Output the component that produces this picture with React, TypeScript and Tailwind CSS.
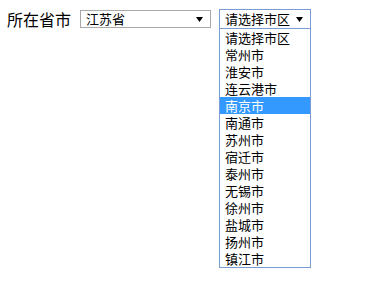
import React from "react";

const cities = [
  "请选择市区",
  "常州市",
  "淮安市",
  "连云港市",
  "南京市",
  "南通市",
  "苏州市",
  "宿迁市",
  "泰州市",
  "无锡市",
  "徐州市",
  "盐城市",
  "扬州市",
  "镇江市",
];

const Arrow: React.FC = () => (
  <svg width="7" height="5" viewBox="0 0 7 5" className="shrink-0">
    <path d="M0 0 H7 L3.5 5 Z" fill="#000" />
  </svg>
);

export default function App() {
  const selected = "南京市";

  return (
    <div
      className="w-[367px] h-[282px] bg-white text-black"
      style={{ fontFamily: '"Noto Sans CJK SC", "Noto Sans", sans-serif' }}
    >
      <div className="flex items-start pt-[9px] pl-[7px]">
        <span className="text-[16px] leading-[20px] mt-[0px]">所在省市</span>

        <div className="ml-[9px] mt-[1px] w-[131px] h-[18px] border border-[#a9a9a9] flex items-center justify-between pl-[5px] pr-[7px] text-[13px] leading-[16px]">
          <span>江苏省</span>
          <Arrow />
        </div>

        <div className="relative ml-[8px]">
          <div className="w-[92px] h-[20px] border border-[#7a9cd3] flex items-center justify-between pl-[5px] pr-[7px] text-[13px] leading-[16px]">
            <span>请选择市区</span>
            <Arrow />
          </div>
          <ul className="absolute left-0 top-[19px] w-[92px] border border-[#7a9cd3] bg-white text-[13px]">
            {cities.map((c) => (
              <li
                key={c}
                className={
                  c === selected
                    ? "h-[17px] leading-[17px] pl-[5px] bg-[#3399ff] text-white"
                    : "h-[17px] leading-[17px] pl-[5px]"
                }
              >
                {c}
              </li>
            ))}
          </ul>
        </div>
      </div>
    </div>
  );
}
